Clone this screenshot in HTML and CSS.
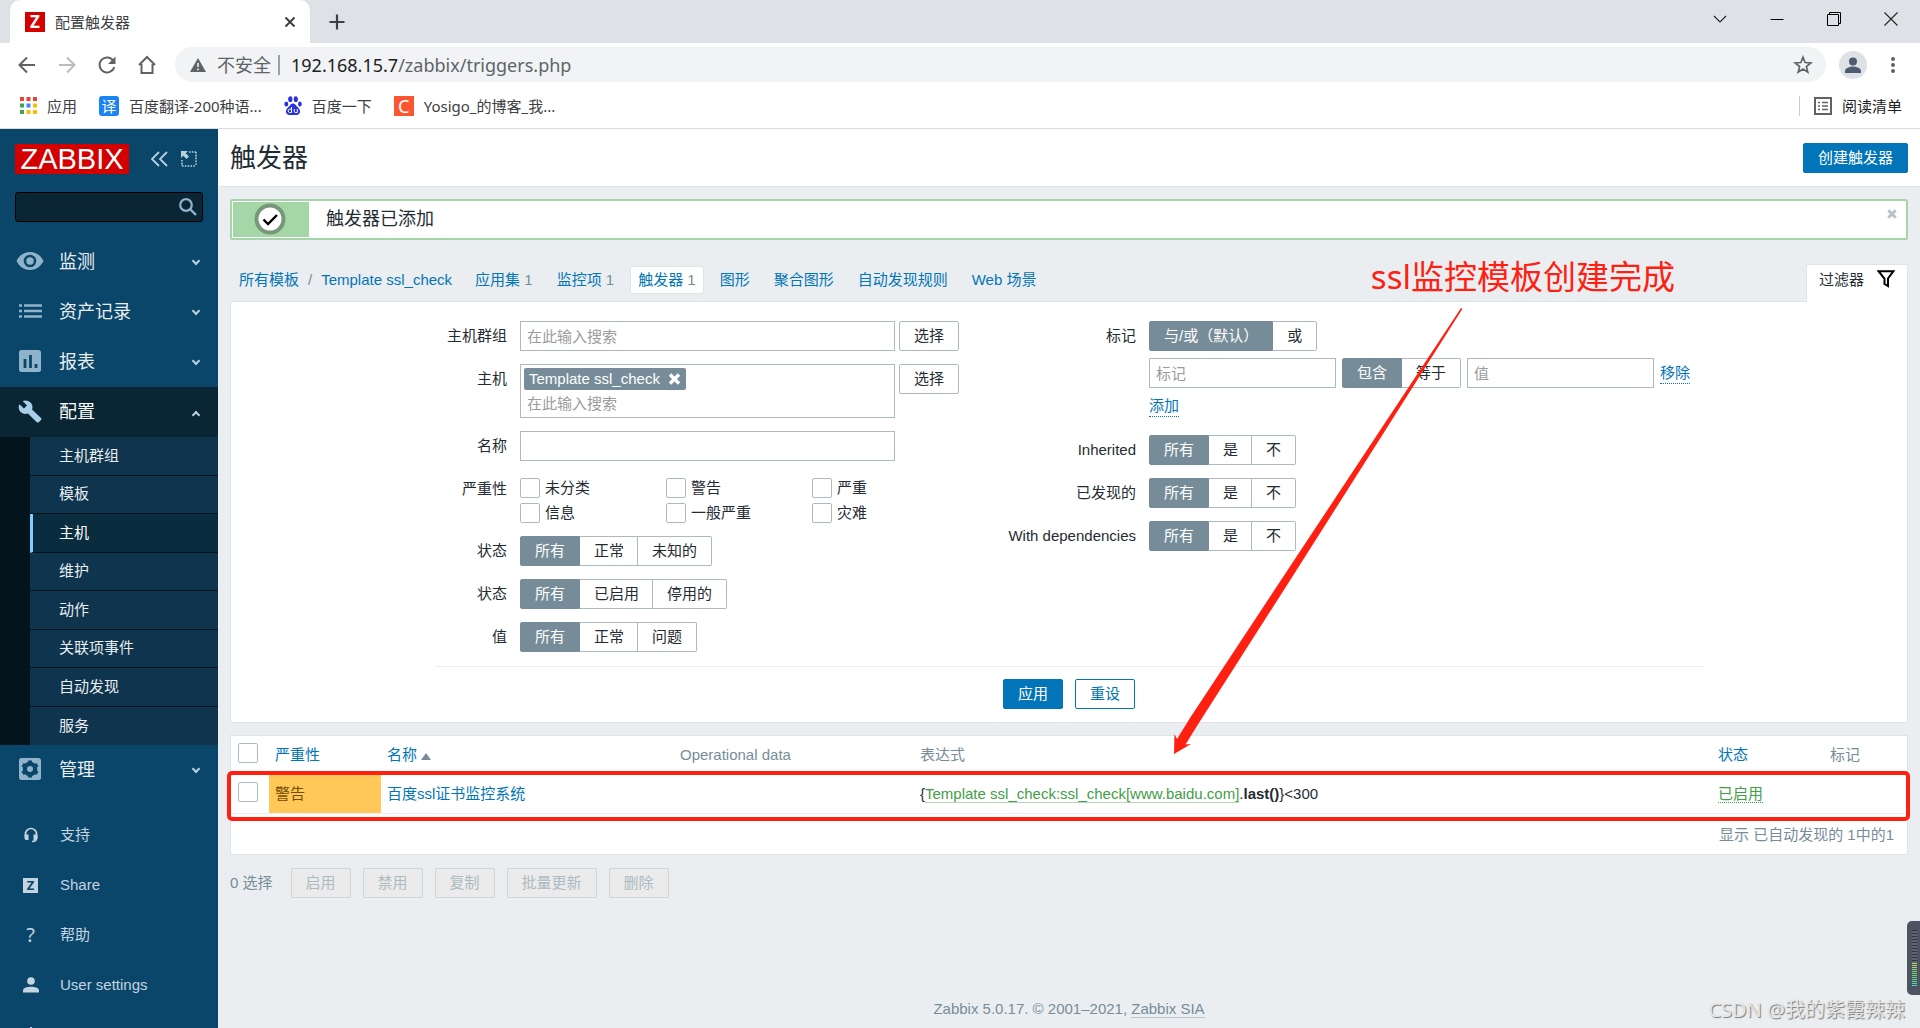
FILE: index.html
```
<!DOCTYPE html>
<html lang="zh-CN">
<head>
<meta charset="utf-8">
<title>配置触发器</title>
<link rel="stylesheet" href="styles.css">
</head>
<body>
<header class="browser">
  <div class="tabs">
    <div class="tab">
      <span class="favicon">Z</span>
      <span class="tab-title">配置触发器</span>
      <button class="plain" aria-label="关闭标签页"><svg width="12" height="12" viewBox="0 0 12 12"><path d="M1.500 1.500l9 9M10.500 1.500l-9 9" stroke="#3c4043" stroke-width="2"/></svg></button>
    </div>
    <button class="plain new-tab" aria-label="新标签页"><svg width="16" height="16" viewBox="0 0 16 16"><path d="M8 0.500v15M0.500 8h15" stroke="#3c4043" stroke-width="2.200"/></svg></button>
    <div class="window-controls">
      <button class="plain" aria-label="搜索标签页"><svg width="14" height="14" viewBox="0 0 14 14"><path d="M1 4l6 6 6-6" fill="none" stroke="#222" stroke-width="1.100"/></svg></button>
      <button class="plain" aria-label="最小化"><svg width="14" height="14" viewBox="0 0 14 14"><path d="M0.500 7.500h13" stroke="#000"/></svg></button>
      <button class="plain" aria-label="还原"><svg width="14" height="14" viewBox="0 0 14 14"><path d="M0.500 2.500h11v11h-11zM2.500 2.500v-2h11v11h-2" fill="none" stroke="#000"/></svg></button>
      <button class="plain" aria-label="关闭"><svg width="14" height="14" viewBox="0 0 14 14"><path d="M0.500 0.500l13 13M13.500 0.500l-13 13" stroke="#222" stroke-width="1.100"/></svg></button>
    </div>
  </div>
  <div class="toolbar">
    <button class="plain" aria-label="后退"><svg width="20" height="20" viewBox="0 0 20 20"><path d="M18 10H3M10 2.500L2.500 10l7.500 7.500" fill="none" stroke="#5f6368" stroke-width="2"/></svg></button>
    <button class="plain" aria-label="前进"><svg width="20" height="20" viewBox="0 0 20 20"><path d="M2 10h15M10 2.500l7.500 7.500-7.500 7.500" fill="none" stroke="#babcbe" stroke-width="2"/></svg></button>
    <button class="plain" aria-label="刷新"><svg width="20" height="20" viewBox="0 0 20 20"><path d="M16.500 6A7.500 7.500 0 1 0 17.300 12" fill="none" stroke="#5f6368" stroke-width="2"/><path d="M18.500 1.500v7.500H11z" fill="#5f6368"/></svg></button>
    <button class="plain" aria-label="主页"><svg width="20" height="20" viewBox="0 0 20 20"><path d="M2 10L10 2l8 8M4.500 9v9h11V9" fill="none" stroke="#5f6368" stroke-width="2"/></svg></button>
    <div class="address">
      <svg width="16" height="16" viewBox="0 0 16 16"><path d="M8 1l8 14H0z" fill="#5f6368"/><path d="M8 6v4M8 11.500v1.700" stroke="#f1f3f4" stroke-width="1.600"/></svg>
      <span class="insecure">不安全</span>
      <span class="url"><b>192.168.15.7</b>/zabbix/triggers.php</span>
      <button class="plain star" aria-label="收藏"><svg width="20" height="20" viewBox="0 0 20 20"><path d="M10 2.200l2.100 5.300 5.700.4-4.400 3.700 1.400 5.500L10 14.100l-4.800 3 1.400-5.500L2.200 7.900l5.700-.4z" fill="none" stroke="#5f6368" stroke-width="1.700"/></svg></button>
    </div>
    <button class="plain profile" aria-label="用户"><svg width="28" height="28" viewBox="0 0 28 28"><circle cx="14" cy="14" r="14" fill="#dee1e6"/><circle cx="14" cy="10.500" r="4" fill="#4d5b6e"/><path d="M6 22v-2c0-3 5-4.500 8-4.500s8 1.500 8 4.500v2z" fill="#4d5b6e"/></svg></button>
    <button class="plain" aria-label="菜单"><svg width="6" height="18" viewBox="0 0 6 18"><g fill="#5f6368"><circle cx="3" cy="3" r="2"/><circle cx="3" cy="9" r="2"/><circle cx="3" cy="15" r="2"/></g></svg></button>
  </div>
  <nav class="bookmarks">
    <a href="#"><svg width="17" height="17" viewBox="0 0 17 17"><g fill="#ea4335"><path d="M0 0h4v4H0zM6.500 0h4v4h-4zM13 0h4v4h-4z"/></g><path d="M0 6.500h4v4H0zM0 13h4v4H0z" fill="#34a853"/><path d="M6.500 6.500h4v4h-4z" fill="#4285f4"/><path d="M13 6.500h4v4h-4zM6.500 13h4v4h-4zM13 13h4v4h-4z" fill="#fbbc04"/></svg>应用</a>
    <a href="#"><span class="site fanyi">译</span>百度翻译-200种语...</a>
    <a href="#"><svg width="18" height="20" viewBox="0 0 18 20" fill="#2932e1"><ellipse cx="6.300" cy="3.200" rx="2.100" ry="2.900"/><ellipse cx="11.800" cy="3.200" rx="2.100" ry="2.900"/><ellipse cx="2.300" cy="8" rx="2" ry="2.600"/><ellipse cx="15.900" cy="8" rx="1.900" ry="2.600"/><path d="M9 7.500c2 0 2.700 1.600 4 3 1.600 1.600 3.500 3 3 5.800-.5 2.800-3.500 3-7 2.700-3.500.3-6.500.1-7-2.700-.5-2.800 1.400-4.200 3-5.800 1.300-1.400 2-3 4-3z"/><path d="M7.500 11v5.500H5.800a1.500 1.500 0 0 1 0-3.300h1.700M10.300 13v2.500q0 1 1 1h2V13" fill="none" stroke="#fff"/></svg>百度一下</a>
    <a href="#"><span class="site csdn">C</span>Yosigo_的博客_我...</a>
    <a href="#" class="reading"><svg width="18" height="18" viewBox="0 0 18 18"><path d="M1 1h16v16H1z" fill="none" stroke="#5f6368" stroke-width="2"/><path d="M4 5.500h2M4 9h2M4 12.500h2M8 5.500h6M8 9h6M8 12.500h6" stroke="#5f6368" stroke-width="1.500"/></svg>阅读清单</a>
  </nav>
</header>

<div class="app">
  <aside class="sidebar">
    <div class="brand">
      <a href="#" class="logo">ZABBIX</a>
      <button class="plain" aria-label="收起"><svg width="18" height="16" viewBox="0 0 18 16"><path d="M9 1L2 8l7 7M17 1l-7 7 7 7" fill="none" stroke="#b8cfdd" stroke-width="1.800"/></svg></button>
      <button class="plain" aria-label="隐藏"><svg width="16" height="16" viewBox="0 0 16 16"><path d="M8 1h7M15 1v14M1 15h14M1 9v6" stroke="#b8cfdd" stroke-width="1.600" stroke-dasharray="1.600 1.200"/><path d="M0 0h7L4.800 2.200 8 5.500 5.500 8 2.200 4.800 0 7z" fill="#b8cfdd"/></svg></button>
    </div>
    <form class="search">
      <input type="text" aria-label="搜索">
      <button class="plain" type="button" aria-label="搜索"><svg width="18" height="18" viewBox="0 0 18 18"><circle cx="7" cy="7" r="5.800" fill="none" stroke="#8fb3cb" stroke-width="2.200"/><path d="M11 11l6 6" stroke="#8fb3cb" stroke-width="2.400"/></svg></button>
    </form>
    <nav class="menu">
      <a href="#"><svg width="30" height="24" viewBox="0 0 30 24"><path d="M0.500 11C3.500 5 8.500 2 14 2S24.500 5 27.500 11c-3 6-8 9-13.500 9S3.500 17 0.500 11z" fill="#8fb3cb"/><circle cx="14" cy="11" r="5" fill="none" stroke="#0a466a" stroke-width="2.600"/></svg>监测<i class="caret"></i></a>
      <a href="#"><svg width="30" height="24" viewBox="0 0 30 24"><path d="M3 5.500h3M3 11h3M3 16.500h3M8 5.500h18M8 11h18M8 16.500h18" stroke="#8fb3cb" stroke-width="2.400"/></svg>资产记录<i class="caret"></i></a>
      <a href="#"><svg width="30" height="24" viewBox="0 0 30 24"><rect x="3" y="0" width="22" height="22" rx="2.500" fill="#8fb3cb"/><path d="M9 9v9M14.500 5v13M20 14v4" stroke="#0a466a" stroke-width="2.800"/></svg>报表<i class="caret"></i></a>
      <a href="#" class="open"><svg width="30" height="24" viewBox="0 0 30 24"><path d="M23 22l2-2c.6-.6.5-1.300 0-1.900L16 9.500c1-2.600.4-5-1.500-7C12.300.4 9.200-.1 6.600 1.100L11 5.500 7.900 8.600 3.400 4.200c-1.300 2.700-.8 5.700 1.300 7.800 2 2 4.700 2.400 7.200 1.500l8.900 8.700c.6.500 1.600.5 2.200-.2z" fill="#a9cfe8"/></svg>配置<i class="caret up"></i></a>
      <div class="submenu">
        <a href="#">主机群组</a>
        <a href="#">模板</a>
        <a href="#" class="current">主机</a>
        <a href="#">维护</a>
        <a href="#">动作</a>
        <a href="#">关联项事件</a>
        <a href="#">自动发现</a>
        <a href="#">服务</a>
      </div>
      <a href="#"><svg width="30" height="24" viewBox="0 0 30 24"><rect x="3" y="0" width="22" height="22" rx="2.500" fill="#8fb3cb"/><circle cx="14" cy="11" r="5" fill="none" stroke="#0a466a" stroke-width="4.500"/><path d="M14 2.500v17M6.500 6.700l15 8.600M21.500 6.700l-15 8.600" stroke="#0a466a" stroke-width="4"/><circle cx="14" cy="11" r="3" fill="#8fb3cb"/></svg>管理<i class="caret"></i></a>
    </nav>
    <nav class="menu user-menu">
      <a href="#"><svg width="16" height="16" viewBox="0 0 16 16"><path d="M2.500 9V7a5.500 5.500 0 0 1 11 0v4c0 2-1.500 3.500-4.500 3.500" fill="none" stroke="#c3d5e0" stroke-width="1.700"/><path d="M1.500 7.500h4v5.500h-2c-1.300 0-2-1-2-2zM10.500 7.500h4V11c0 1-.7 2-2 2h-2z" fill="#c3d5e0"/></svg>支持</a>
      <a href="#"><span class="zicon">Z</span>Share</a>
      <a href="#"><span class="qicon">?</span>帮助</a>
      <a href="#"><svg width="16" height="16" viewBox="0 0 16 16" fill="#c3d5e0"><circle cx="8" cy="4" r="3.800"/><path d="M0 15.500v-2C0 10.800 4.500 9.800 8 9.800s8 1 8 3.700v2z"/></svg>User settings</a>
      <a href="#" aria-label="退出"><svg width="16" height="16" viewBox="0 0 16 16"><path d="M8 0v8M4 3a6 6 0 1 0 8 0" fill="none" stroke="#c3d5e0" stroke-width="2"/></svg></a>
    </nav>
  </aside>

  <main class="page">
    <div class="page-head">
      <h1>触发器</h1>
      <button class="btn primary">创建触发器</button>
    </div>

    <div class="content">
      <div class="message" role="status">
        <span class="message-icon"><svg width="32" height="32" viewBox="0 0 32 32"><circle cx="16" cy="16" r="13.500" fill="#fff" stroke="#779878" stroke-width="4"/><path d="M9.500 16.500l4.500 4.500 9-9" fill="none" stroke="#000" stroke-width="2.400"/></svg></span>
        <span class="message-text">触发器已添加</span>
        <button class="plain" aria-label="关闭"><svg width="10" height="10" viewBox="0 0 10 10"><path d="M1.300 1.300l7.400 7.400M8.700 1.300L1.300 8.700" stroke="#b5c2c9" stroke-width="3"/></svg></button>
      </div>

      <nav class="crumbs">
        <a href="#">所有模板</a><span class="slash">/</span><a href="#">Template ssl_check</a>
        <ul>
          <li><a href="#">应用集</a> 1</li>
          <li><a href="#">监控项</a> 1</li>
          <li class="selected"><a href="#">触发器</a> 1</li>
          <li><a href="#">图形</a></li>
          <li><a href="#">聚合图形</a></li>
          <li><a href="#">自动发现规则</a></li>
          <li><a href="#">Web 场景</a></li>
        </ul>
        <button class="filter-tab">过滤器<svg width="18" height="18" viewBox="0 0 18 18"><path d="M1.500 1.200h15L11 8.500V16l-3.500-2V8.500z" fill="none" stroke="#000" stroke-width="2"/></svg></button>
      </nav>

      <form class="filter">
        <div class="filter-columns">
          <div class="fields left">
            <label for="groups">主机群组</label>
            <div class="line"><input class="text" id="groups" type="text" placeholder="在此输入搜索"><button class="btn" type="button">选择</button></div>
            <label for="hosts">主机</label>
            <div class="line">
              <div class="multi">
                <span class="chip">Template ssl_check<button class="plain" type="button" aria-label="删除"><svg width="13" height="12" viewBox="0 0 13 12"><path d="M2 1.500l9 9M11 1.500l-9 9" stroke="#fff" stroke-width="3.400"/></svg></button></span>
                <input id="hosts" type="text" placeholder="在此输入搜索">
              </div>
              <button class="btn" type="button">选择</button>
            </div>
            <label for="name">名称</label>
            <div class="line"><input class="text" id="name" type="text"></div>
            <span class="label">严重性</span>
            <div class="severities">
              <label><input type="checkbox">未分类</label>
              <label><input type="checkbox">警告</label>
              <label><input type="checkbox">严重</label>
              <label><input type="checkbox">信息</label>
              <label><input type="checkbox">一般严重</label>
              <label><input type="checkbox">灾难</label>
            </div>
            <span class="label">状态</span>
            <div class="segments">
              <label><input type="radio" name="state" checked><span>所有</span></label><label><input type="radio" name="state"><span>正常</span></label><label><input type="radio" name="state"><span>未知的</span></label>
            </div>
            <span class="label">状态</span>
            <div class="segments">
              <label><input type="radio" name="status" checked><span>所有</span></label><label><input type="radio" name="status"><span>已启用</span></label><label><input type="radio" name="status"><span>停用的</span></label>
            </div>
            <span class="label">值</span>
            <div class="segments">
              <label><input type="radio" name="value" checked><span>所有</span></label><label><input type="radio" name="value"><span>正常</span></label><label><input type="radio" name="value"><span>问题</span></label>
            </div>
          </div>
          <div class="fields right">
            <span class="label">标记</span>
            <div class="tags">
              <div class="segments">
                <label><input type="radio" name="evaltype" checked><span>与/或（默认）</span></label><label><input type="radio" name="evaltype"><span>或</span></label>
              </div>
              <div class="tag-row">
                <input class="text" type="text" placeholder="标记" aria-label="标记">
                <div class="segments">
                  <label><input type="radio" name="operator" checked><span>包含</span></label><label><input type="radio" name="operator"><span>等于</span></label>
                </div>
                <input class="text" type="text" placeholder="值" aria-label="值">
                <button class="link" type="button">移除</button>
              </div>
              <div class="add-row"><button class="link" type="button">添加</button></div>
            </div>
            <span class="label">Inherited</span>
            <div class="segments">
              <label><input type="radio" name="inherited" checked><span>所有</span></label><label><input type="radio" name="inherited"><span>是</span></label><label><input type="radio" name="inherited"><span>不</span></label>
            </div>
            <span class="label">已发现的</span>
            <div class="segments">
              <label><input type="radio" name="discovered" checked><span>所有</span></label><label><input type="radio" name="discovered"><span>是</span></label><label><input type="radio" name="discovered"><span>不</span></label>
            </div>
            <span class="label">With dependencies</span>
            <div class="segments">
              <label><input type="radio" name="dependent" checked><span>所有</span></label><label><input type="radio" name="dependent"><span>是</span></label><label><input type="radio" name="dependent"><span>不</span></label>
            </div>
          </div>
        </div>
        <div class="filter-actions">
          <button class="btn primary" type="button">应用</button>
          <button class="btn outline" type="button">重设</button>
        </div>
      </form>

      <section class="results">
        <table>
          <colgroup><col class="c-check"><col class="c-severity"><col class="c-name"><col class="c-data"><col class="c-expression"><col class="c-status"><col class="c-tags"></colgroup>
          <thead>
            <tr><th><input type="checkbox" aria-label="全选"></th><th><a href="#">严重性</a></th><th><a href="#">名称</a> <i class="sort"></i></th><th>Operational data</th><th>表达式</th><th><a href="#">状态</a></th><th>标记</th></tr>
          </thead>
          <tbody>
            <tr><td><input type="checkbox" aria-label="选择触发器"></td><td class="warning">警告</td><td><a href="#">百度ssl证书监控系统</a></td><td></td><td>{<a href="#" class="item">Template ssl_check:ssl_check[www.baidu.com]</a>.<b>last()</b>}&lt;300</td><td><a href="#" class="enabled">已启用</a></td><td></td></tr>
          </tbody>
        </table>
        <p class="count">显示 已自动发现的 1中的1</p>
        <div class="highlight"></div>
      </section>

      <div class="bulk">
        <span>0 选择</span>
        <button class="btn" disabled>启用</button>
        <button class="btn" disabled>禁用</button>
        <button class="btn" disabled>复制</button>
        <button class="btn" disabled>批量更新</button>
        <button class="btn" disabled>删除</button>
      </div>

      <div class="note">ssl监控模板创建完成</div>
      <svg class="arrow" width="290" height="448" viewBox="0 0 290 448"><path d="M287 1l1.500.8L122 264 25.500 415 11.500 437.500 17 437 0 447 .5 427l2.500 5L16 411l99-150z" fill="#ff2012"/></svg>
    </div>

    <footer>Zabbix 5.0.17. © 2001–2021, <a href="#">Zabbix SIA</a></footer>
  </main>
</div>
<div class="meter"><i class="idle"></i><i class="level"></i></div>
<div class="watermark">CSDN @我的紫霞辣辣</div>
</body>
</html>
```
FILE: styles.css
```
* { box-sizing: border-box; }

body {
  margin: 0;
  height: 100vh;
  display: flex;
  flex-direction: column;
  position: relative;
  overflow: hidden;
  background: #ebeef0;
  color: #1f2c33;
  font: 15px/20px "Liberation Sans", "Noto Sans CJK SC", sans-serif;
}

a { color: #0275b8; text-decoration: none; }
input, button { font: inherit; color: inherit; margin: 0; }
svg { display: block; flex: none; }
.plain { display: flex; padding: 0; border: 0; background: none; }

/* Browser window */
.browser { flex: none; background: #fff; border-bottom: 1px solid #dadce0; font-family: "Noto Sans", "Noto Sans CJK SC", sans-serif; }
.tabs { display: flex; align-items: center; height: 43px; padding-left: 10px; background: #dee1e6; }
.tab { display: flex; align-items: center; width: 300px; height: 43px; padding: 0 14px 0 15px; background: #fff; border-radius: 10px 10px 0 0; color: #3c4043; }
.favicon { width: 20px; height: 20px; margin-right: 10px; background: #d40000; color: #fff; font: bold 17px/20px "Open Sans", sans-serif; text-align: center; }
.tab-title { flex: 1; }
.new-tab { margin-left: 19px; }
.window-controls { display: flex; gap: 43px; margin-left: auto; padding: 0 22px 6px 0; }
.toolbar { display: flex; align-items: center; gap: 20px; padding: 4px 24px 4px 17px; }
.address { display: flex; align-items: center; flex: 1; height: 35px; margin: 0 -7px 0 -2px; padding: 0 13px 0 15px; border-radius: 18px; background: #f1f3f4; color: #5f6368; font-size: 18px; }
.insecure { margin: 0 7px 0 11px; }
.url { padding-left: 11px; border-left: 2px solid #9aa0a6; }
.url b { color: #202124; font-weight: 400; }
.star { margin-left: auto; }
.profile { margin-right: 3px; }
.bookmarks { display: flex; align-items: center; gap: 22px; height: 42px; padding: 0 18px 3px 20px; }
.bookmarks a { display: flex; align-items: center; gap: 10px; color: #3c4043; }
.site { width: 20px; height: 20px; color: #fff; line-height: 20px; text-align: center; }
.fanyi { border-radius: 3px; background: #1a84f5; }
.csdn { background: #fc5531; font-size: 18px; }
.bookmarks .reading { margin-left: auto; padding-left: 14px; border-left: 1px solid #ccc; color: #202124; }

/* Sidebar */
.app { display: flex; flex: 1; min-height: 0; }
.sidebar { flex: none; width: 218px; overflow: hidden; background: #0a466a; }
.brand { display: flex; align-items: center; gap: 13px; padding: 15px 15px 18px; }
.logo { width: 114px; height: 30px; margin-right: 8px; background: #d40000; color: #fff; font: 29px/30px "Liberation Sans", sans-serif; text-align: center; }
.search { display: flex; align-items: center; height: 30px; margin: 0 15px 15px; padding-right: 5px; border: 1px solid #000; border-radius: 3px; background: #0a2635; }
.search input { flex: 1; min-width: 0; border: 0; background: none; color: #fff; }
.menu > a { display: flex; align-items: center; gap: 13px; height: 50px; padding: 0 16px; color: #e9eef1; font-size: 18px; }
.caret { width: 6px; height: 6px; margin: 0 3px 3px auto; border: solid #b8cfdd; border-width: 0 2px 2px 0; transform: rotate(45deg); }
.caret.up { margin-bottom: -5px; transform: rotate(225deg); }
.menu > .open { background: #0a2635; color: #fff; }
.submenu { display: grid; grid-auto-rows: 1fr; min-height: 308px; padding-left: 30px; background: #04141d; }
.submenu a { display: flex; align-items: center; padding-left: 29px; border-bottom: 1px solid #04141d; background: #0f344d; color: #e9eef1; }
.submenu a:last-child { border-bottom: 0; }
.submenu .current { padding-left: 26px; border-left: 3px solid #80cbff; background: #0a2c3f; color: #fff; }
.user-menu { padding-top: 15px; }
.user-menu > a { gap: 21px; padding: 0 23px; color: #c3d5e0; font-size: 15px; }
.zicon { width: 15px; height: 15px; background: #c3d5e0; color: #0a466a; font: bold 13px/15px "Open Sans", sans-serif; text-align: center; }
.qicon { width: 15px; font: 20px/20px "Noto Sans", sans-serif; text-align: center; }
.zicon, .qicon { margin-right: 1px; }

/* Page */
.page { display: flex; flex: 1; flex-direction: column; min-width: 0; }
.page-head { display: flex; align-items: center; justify-content: space-between; height: 58px; padding: 0 12px; border-bottom: 1px solid #dfe4e7; background: #fff; }
h1 { margin: 0; font-size: 26px; font-weight: 400; line-height: 32px; }
.content { position: relative; padding: 12px 12px 0; }
.btn { height: 30px; padding: 0 14px; border: 1px solid #acbbc2; border-radius: 2px; background: #fff; line-height: 20px; }
.btn.primary { border-color: #0275b8; background: #0275b8; color: #fff; }
.btn.outline { border-color: #0275b8; color: #0275b8; }
.btn:disabled { border-color: #ccd5d9; background: #ebebeb; color: #acbbc2; }
.message { display: flex; height: 41px; padding: 1px; border: 2px solid #a5d6a7; border-radius: 2px; background: #fff; }
.message-icon { display: flex; align-items: center; justify-content: center; width: 76px; padding: 0 3px 2px 0; background: #a5d6a7; }
.message-text { flex: 1; padding-left: 17px; font-size: 18px; line-height: 34px; }
.message button { padding: 7px 8px 0 0; }
.crumbs { display: flex; height: 38px; margin: 24px 0 -1px; padding-left: 9px; line-height: 32px; position: relative; }
.slash { margin: 0 9px; color: #768d99; }
.crumbs ul { display: flex; gap: 8px; margin: 0 auto 0 15px; padding: 2px 0 0; list-style: none; }
.crumbs li { height: 28px; padding: 0 7px; border: 1px solid transparent; border-radius: 2px; color: #768d99; line-height: 26px; }
.crumbs .selected { border-color: #dfe4e7; background: #fff; }
.filter-tab { display: flex; gap: 13px; height: 38px; padding: 5px 12px 0; border: 1px solid #dfe4e7; border-bottom: 0; background: #fff; line-height: 20px; }

/* Filter */
.filter { border: 1px solid #dfe4e7; background: #fff; padding: 19px 16px 13px; }
.filter-columns, .filter-actions { max-width: 1268px; margin: 0 auto; }
.filter-columns { display: grid; grid-template-columns: 574px 1fr; align-items: start; padding-bottom: 14px; }
.fields { display: grid; gap: 13px 12px; align-items: start; }
.left { grid-template-columns: 73px 1fr; }
.right { grid-template-columns: 128px 1fr; }
.fields > label, .label { display: flex; justify-content: flex-end; padding: 5px 1px 3px 0; white-space: nowrap; }
.line { display: flex; gap: 4px; align-items: start; }
.text { width: 375px; height: 30px; padding: 0 6px; border: 1px solid #acbbc2; background: #fff; }
::placeholder { color: #9c9c9c; opacity: 1; }
.multi { width: 375px; height: 54px; padding: 3px; border: 1px solid #acbbc2; }
.chip { display: inline-flex; align-items: center; gap: 8px; height: 22px; padding: 0 5px; border-radius: 2px; background: #768d99; color: #fff; vertical-align: top; }
.multi input { display: block; width: 100%; height: 26px; padding: 0 3px; border: 0; background: none; }
.severities { display: grid; grid-template-columns: 146px 146px 100px; gap: 5px 0; padding-top: 4px; }
.severities label { display: flex; align-items: center; gap: 5px; height: 20px; }
[type="checkbox"] { appearance: none; display: block; flex: none; width: 20px; height: 20px; border: 1px solid #acbbc2; border-radius: 2px; background: #fff; }
.segments { display: flex; height: 30px; }
.segments label { position: relative; }
.segments input { appearance: none; position: absolute; inset: 0; }
.segments span { position: relative; display: block; height: 30px; padding: 4px 13px 4px 14px; border: solid #acbbc2; border-width: 1px 1px 1px 0; line-height: 20px; }
.segments input:checked + span { padding: 4px 14px; border: 1px solid #768d99; background: #768d99; color: #fff; }
.segments label:first-child span { border-radius: 2px 0 0 2px; }
.segments label:last-child span { padding: 4px 14px; border-radius: 0 2px 2px 0; }
.tags { display: grid; gap: 7px; }
.tag-row { display: flex; gap: 6px; align-items: center; }
.tag-row .text { width: 187px; }
.link { padding: 0; border: 0; border-bottom: 1px dotted #0275b8; background: none; color: #0275b8; line-height: 20px; }
.add-row { height: 27px; padding-top: 1px; }
.filter-actions { display: flex; gap: 12px; justify-content: center; padding-top: 12px; border-top: 1px solid #ebeef0; }

/* Results */
.results { position: relative; height: 120px; margin-top: 12px; border: 1px solid #dfe4e7; background: #fff; }
table { width: 100%; table-layout: fixed; border-collapse: collapse; }
th, td { height: 40px; padding: 1px 6px 0; border-bottom: 1px solid #ebeef0; font-weight: 400; text-align: left; }
th { height: 37px; color: #768d99; }
th:first-child, td:first-child { padding: 0 0 2px 7px; }
.c-check { width: 38px; }
.c-severity { width: 112px; }
.c-name { width: 293px; }
.c-data { width: 240px; }
.c-status { width: 112px; }
.c-tags { width: 83px; }
.sort { display: inline-block; border: 5px solid transparent; border-top: 0; border-bottom: 7px solid #768d99; }
.warning { background: #ffc859; color: #734d00; }
.item { border-bottom: 1px solid #b5d8b7; color: #429e47; }
.enabled { border-bottom: 1px dotted #429e47; color: #429e47; }
.count { margin: 11px 13px 0; color: #768d99; text-align: right; }
.bulk { display: flex; gap: 12px; align-items: center; padding-top: 13px; color: #768d99; }
.bulk span { margin-right: 6px; }
footer { margin-top: auto; padding-bottom: 9px; color: #768d99; text-align: center; }
footer a { border-bottom: 1px solid #bcc7cd; color: inherit; }

/* Overlays */
.highlight { position: absolute; inset: 35px -3px auto -4px; height: 50px; border: 4px solid #ff2012; border-radius: 5px; }
.note { position: absolute; top: 66px; right: 245px; color: #ff2012; font: 33px/48px "Noto Sans", "Noto Sans CJK SC", sans-serif; white-space: nowrap; }
.arrow { position: absolute; top: 120px; right: 456px; }
.meter { position: absolute; top: 921px; right: 0; display: flex; flex-direction: column; width: 13px; height: 74px; padding: 9px 3px 8px 5px; border-radius: 5px 0 0 5px; background: #4c5462; }
.idle, .level { flex: 4; background: repeating-linear-gradient(#30343e 0 1px, #5e6474 1px 3px); }
.level { flex: 3; background: repeating-linear-gradient(transparent 0 1px, #4c5462 1px 2px), linear-gradient(#c5d667, #63d66f, #42d5cb); }
.watermark { position: absolute; right: 15px; bottom: 4px; color: #e4e6e8; font: 20px/28px "Noto Sans", "Noto Sans CJK SC", sans-serif; text-shadow: 1px 1px 1px #777; }
```
